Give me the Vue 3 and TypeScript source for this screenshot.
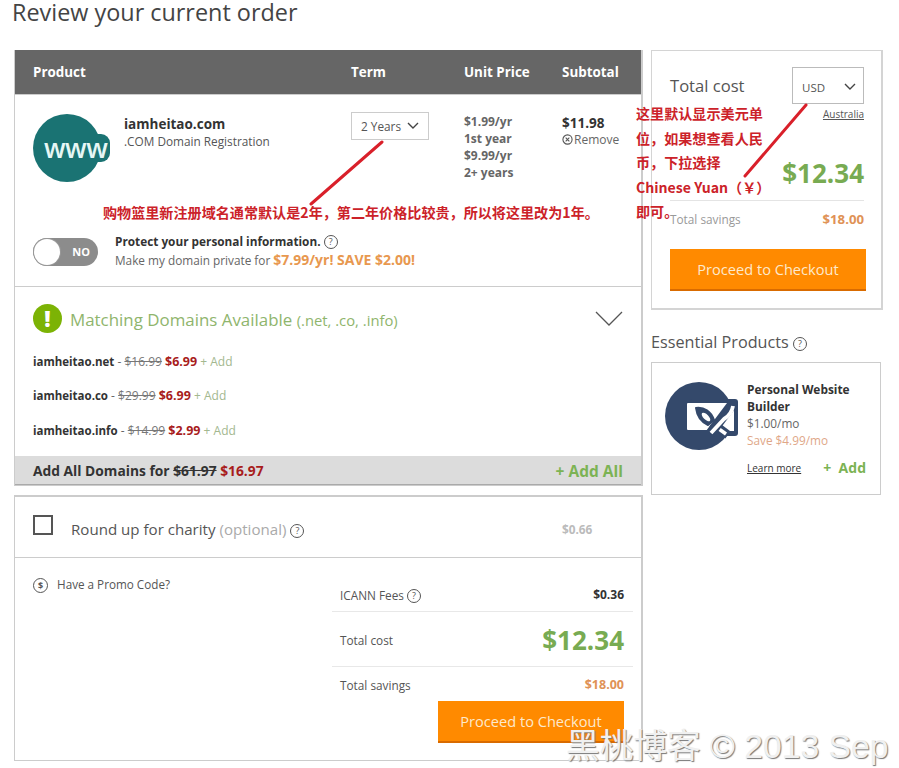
<template>
  <div class="page">
    <h1 class="title">Review your current order</h1>
    <div class="columns">
      <div class="main">
        <section class="card order">
          <div class="grid head">
            <span>Product</span>
            <span>Term</span>
            <span>Unit Price</span>
            <span>Subtotal</span>
          </div>
          <div class="grid product">
            <div class="product-info">
              <div class="www"><span>www</span></div>
              <div class="domain-text">
                <div class="domain">iamheitao.com</div>
                <div class="domain-type">.COM Domain Registration</div>
              </div>
            </div>
            <div class="term">
              2 Years
              <svg width="12" height="8" viewBox="0 0 12 8"><path d="M1 1l5 5 5-5" fill="none" stroke="#444" stroke-width="1.4" /></svg>
            </div>
            <div class="unit">$1.99/yr<br />1st year<br />$9.99/yr<br />2+ years</div>
            <div class="sub-col">
              <div class="subtotal">$11.98</div>
              <div class="remove">
                <svg width="11" height="11" viewBox="0 0 12 12"><circle cx="6" cy="6" r="5" fill="none" stroke="#555" stroke-width="1.2" /><path d="M4 4l4 4M8 4l-4 4" stroke="#555" stroke-width="1.2" /></svg>
                Remove
              </div>
            </div>
          </div>
          <div class="privacy">
            <div class="toggle"><span class="knob"></span><span class="no">NO</span></div>
            <div>
              <div class="protect">Protect your personal information. <i class="help">?</i></div>
              <div class="private">Make my domain private for <b>$7.99/yr! SAVE $2.00!</b></div>
            </div>
          </div>
          <div class="matching">
            <div class="match-title">
              <span class="alert">!</span>
              <span class="match-text">Matching Domains Available <small>(.net, .co, .info)</small></span>
              <svg class="chevron" width="28" height="16" viewBox="0 0 28 16"><path d="M1 1l13 13L27 1" fill="none" stroke="#555" stroke-width="1.3" /></svg>
            </div>
            <div v-for="d in domains" :key="d.name" class="match-row">
              <b class="name">{{ d.name }}</b> - <s>{{ d.was }}</s> <b class="red">{{ d.now }}</b> <span class="add-small">+ Add</span>
            </div>
          </div>
          <div class="add-all">
            <span>Add All Domains for <s>$61.97</s> <span class="red">$16.97</span></span>
            <span class="add-all-link">+ Add All</span>
          </div>
        </section>

        <section class="card bottom">
          <div class="charity">
            <span class="check"></span>
            <span class="charity-text">Round up for charity <em>(optional)</em> <i class="help">?</i></span>
            <b class="charity-price">$0.66</b>
          </div>
          <div class="summary">
            <div class="promo"><i class="dollar">$</i> Have a Promo Code?</div>
            <div class="totals">
              <div class="line fees"><span>ICANN Fees <i class="help">?</i></span><b>$0.36</b></div>
              <div class="line total"><span>Total cost</span><b class="big">$12.34</b></div>
              <div class="line savings"><span>Total savings</span><b class="orange">$18.00</b></div>
              <button class="checkout wide">Proceed to Checkout</button>
            </div>
          </div>
        </section>
      </div>

      <aside class="side">
        <section class="card cost">
          <div class="cost-top">
            <span class="cost-label">Total cost</span>
            <div class="currency">
              USD
              <svg width="12" height="8" viewBox="0 0 12 8"><path d="M1 1l5 5 5-5" fill="none" stroke="#444" stroke-width="1.4" /></svg>
            </div>
          </div>
          <div class="australia">Australia</div>
          <div class="cost-price">$12.34</div>
          <div class="cost-save"><span>Total savings</span><b class="orange">$18.00</b></div>
          <button class="checkout">Proceed to Checkout</button>
        </section>
        <h2 class="essential">Essential Products <i class="help">?</i></h2>
        <section class="card builder">
          <svg class="builder-icon" width="73" height="68" viewBox="0 0 73 68">
            <circle cx="34" cy="34" r="34" fill="#34496b" />
            <rect x="24" y="17" width="49" height="37" rx="3" fill="#34496b" />
            <rect x="22" y="21" width="47" height="27" rx="1" fill="#fff" />
            <path d="M60 49h9v-9z" fill="#fff" />
            <!-- brush -->
            <path d="M31 26c8-1 15 3 18 12l-6 5c-7-3-11-9-12-17z" fill="#34496b" stroke="#34496b" stroke-width="2" stroke-linejoin="round" />
            <ellipse cx="41" cy="35" rx="5.5" ry="2.6" transform="rotate(45 41 35)" fill="#fff" />
            <path d="M47 41l16 12" stroke="#34496b" stroke-width="9" />
            <path d="M47 42l14 10" stroke="#fff" stroke-width="3.5" />
            <!-- pencil -->
            <path d="M69 20L45 52" stroke="#34496b" stroke-width="10" />
            <path d="M68 24c-1 6-4 10-9 13L46 51" fill="none" stroke="#fff" stroke-width="3.8" />
          </svg>
          <div class="builder-info">
            <div class="builder-name">Personal Website Builder</div>
            <div class="builder-price">$1.00/mo</div>
            <div class="builder-save">Save $4.99/mo</div>
            <div class="builder-actions">
              <span class="learn">Learn more</span>
              <span class="builder-add">+&nbsp; Add</span>
            </div>
          </div>
        </section>
      </aside>
    </div>

    <!-- annotations drawn over the screenshot -->
    <svg class="marks" width="899" height="768" viewBox="0 0 899 768">
      <path d="M382 142L311 204M806 105L745 176" stroke="#d9202a" stroke-width="3" stroke-linecap="round" />
    </svg>
    <div class="note note-term">购物篮里新注册域名通常默认是2年，第二年价格比较贵，所以将这里改为1年。</div>
    <div class="note note-currency">这里默认显示美元单<br />位，如果想查看人民<br />币，下拉选择<br />Chinese Yuan（￥）<br />即可。</div>
    <div class="watermark">黑桃博客 © 2013 Sep</div>
  </div>
</template>

<script setup lang="ts">
const domains = [
  { name: 'iamheitao.net', was: '$16.99', now: '$6.99' },
  { name: 'iamheitao.co', was: '$29.99', now: '$6.99' },
  { name: 'iamheitao.info', was: '$14.99', now: '$2.99' },
]
</script>

<style>
body {
  background: #fff;
}
</style>

<style scoped>
.page {
  position: relative;
  width: 899px;
  height: 768px;
  overflow: hidden;
  padding-left: 14px;
  box-sizing: border-box;
  font-family: 'Open Sans', 'Noto Sans CJK SC', sans-serif;
  color: #444;
}

.title {
  margin: 0 0 0 -2px;
  height: 50px;
  font-size: 23.4px;
  line-height: 24px;
  font-weight: 400;
  color: #444;
}

.columns {
  display: flex;
  align-items: flex-start;
  gap: 8px;
}

.main {
  width: 629px;
}

.card {
  border: 1px solid #ccc;
  background: #fff;
  box-sizing: border-box;
}

.order {
  height: 436px;
  border-width: 0 2px 1px 1px;
  display: flex;
  flex-direction: column;
}

.grid {
  display: grid;
  grid-template-columns: 318px 113px 98px 1fr;
}

.head {
  height: 45px;
  padding-left: 18px;
  align-items: center;
  background: #666;
  color: #fff;
  font-size: 13.4px;
  font-weight: 700;
  border-bottom: 1px solid #ccc;
  box-sizing: border-box;
}

.product {
  padding: 17px 0 0 18px;
  height: 103px;
  box-sizing: border-box;
}

.product-info {
  display: flex;
  gap: 11px;
}

.www {
  position: relative;
  width: 80px;
  height: 68px;
  margin-top: 2px;
  flex: none;
}

.www::before {
  content: '';
  position: absolute;
  left: 0;
  top: 0;
  width: 68px;
  height: 68px;
  border-radius: 50%;
  background: #1a7373;
}

.www span {
  position: absolute;
  left: 9px;
  top: 20px;
  padding: 0 3px 0 2px;
  border-radius: 0 9px 9px 0;
  background: #1a7373;
  color: #e6f7f5;
  font-size: 26.5px;
  line-height: 28px;
  font-weight: 600;
  letter-spacing: -0.5px;
}

.domain-text {
  padding-top: 4px;
}

.domain {
  font-size: 13.5px;
  line-height: 17px;
  font-weight: 700;
  color: #333;
}

.domain-type {
  font-size: 11.8px;
  line-height: 17px;
  color: #555;
}

.term {
  display: flex;
  align-items: center;
  justify-content: space-between;
  width: 78px;
  height: 28px;
  padding: 0 9px;
  box-sizing: border-box;
  border: 1px solid #ccc;
  font-size: 11.8px;
  color: #555;
}

.unit {
  padding-top: 1px;
  font-size: 12px;
  line-height: 17px;
  font-weight: 700;
  color: #666;
}

.sub-col {
  padding-top: 2px;
}

.subtotal {
  font-size: 13.5px;
  line-height: 18px;
  font-weight: 700;
  color: #333;
}

.remove {
  display: flex;
  align-items: center;
  gap: 1px;
  font-size: 12px;
  line-height: 16px;
  color: #666;
}

.privacy {
  display: flex;
  height: 89px;
  padding: 35px 0 0 18px;
  box-sizing: border-box;
  gap: 17px;
  border-bottom: 1px solid #ccc;
}

.toggle {
  position: relative;
  width: 65px;
  height: 28px;
  margin-top: 5px;
  border-radius: 14px;
  background: #8c8c8c;
}

.knob {
  position: absolute;
  left: 1px;
  top: 1px;
  width: 26px;
  height: 26px;
  border-radius: 50%;
  background: #fff;
  box-shadow: 0 0 0 1px #999;
}

.no {
  position: absolute;
  right: 8px;
  top: 7px;
  font-size: 11px;
  line-height: 14px;
  font-weight: 700;
  color: #fff;
}

.protect {
  margin-top: -1px;
  font-size: 11.8px;
  line-height: 18px;
  font-weight: 700;
  color: #333;
}

.private {
  font-size: 11.8px;
  line-height: 19px;
  color: #666;
}

.private b {
  font-size: 14px;
  color: #e8984f;
}

.help {
  display: inline-block;
  width: 12px;
  height: 12px;
  border: 1px solid #555;
  border-radius: 50%;
  font-size: 9px;
  line-height: 12px;
  text-align: center;
  font-style: normal;
  font-weight: 400;
  color: #555;
  vertical-align: 1px;
}

.matching {
  flex: 1;
  padding: 17px 18px 0 18px;
}

.match-title {
  display: flex;
  align-items: center;
  margin-bottom: 19px;
  height: 30px;
}

.alert {
  width: 29px;
  height: 29px;
  margin-right: 8px;
  border-radius: 50%;
  background: #7cb305;
  color: #fff;
  font-size: 22px;
  line-height: 29px;
  font-weight: 800;
  text-align: center;
}

.match-text {
  flex: 1;
  padding-top: 2px;
  font-size: 16.9px;
  color: #8fb56d;
}

.match-text small {
  font-size: 14.8px;
}

.match-row {
  height: 34.5px;
  font-size: 12px;
  line-height: 18px;
  color: #666;
}

.match-row .name {
  font-size: 11.5px;
  color: #333;
}

.match-row s {
  color: #777;
}

.match-row .red {
  font-size: 12.5px;
}

.match-row .red,
.red {
  color: #a81c1c;
}

.add-small {
  color: #a3b88f;
}

.add-all {
  display: flex;
  justify-content: space-between;
  align-items: center;
  height: 29px;
  padding: 0 18px;
  background: #dcdcdc;
  font-size: 13.8px;
  font-weight: 700;
  color: #333;
  box-shadow: inset 0 -1px 0 #aaa;
}

.add-all-link {
  font-size: 15.5px;
  color: #7cb354;
}

.bottom {
  height: 266px;
  margin-top: 9px;
  border-width: 2px 2px 1px 1px;
}

.charity {
  display: flex;
  align-items: center;
  height: 61px;
  padding: 3px 0 0 18px;
  box-sizing: border-box;
  border-bottom: 1px solid #ccc;
}

.check {
  width: 16px;
  height: 16px;
  margin: -7px 18px 0 0;
  border: 2px solid #555;
}

.charity-text {
  width: 491px;
  font-size: 15.1px;
  color: #555;
}

.charity-text em {
  font-style: normal;
  color: #aaa;
}

.charity-price {
  font-size: 11.8px;
  color: #bbb;
}

.summary {
  display: flex;
  justify-content: space-between;
  padding-left: 18px;
}

.promo {
  margin-top: 18px;
  font-size: 11.7px;
  color: #555;
}

.dollar {
  display: inline-block;
  width: 13px;
  height: 13px;
  margin-right: 6px;
  border: 1.5px solid #555;
  border-radius: 50%;
  font-size: 9px;
  line-height: 13px;
  text-align: center;
  font-style: normal;
  font-weight: 700;
}

.totals {
  width: 301px;
  margin-right: 8px;
  display: flex;
  flex-direction: column;
}

.line {
  display: flex;
  justify-content: space-between;
  align-items: center;
  padding: 0 9px 0 8px;
  font-size: 11.8px;
  color: #555;
}

.line b {
  font-size: 12px;
  color: #333;
}

.fees {
  height: 54px;
  padding-top: 20px;
  box-sizing: border-box;
  border-bottom: 1px solid #e8e8e8;
}

.total {
  height: 55px;
  padding-top: 2px;
  box-sizing: border-box;
  border-bottom: 1px solid #e8e8e8;
}

.line .big {
  font-size: 26px;
  color: #78ab52;
}

.savings {
  height: 35px;
}

.line .orange {
  font-size: 12.5px;
}

.orange {
  color: #df9256 !important;
}

.checkout {
  display: block;
  width: 196px;
  height: 42px;
  padding: 0;
  border: 0;
  border-bottom: 2px solid #d96b00;
  background: #ff8a00;
  color: #fde9cc;
  font-family: inherit;
  font-size: 14.6px;
}

.wide {
  align-self: flex-end;
  margin: -1px 9px 0 0;
  width: 186px;
}

.side {
  width: 232px;
}

.cost {
  height: 260px;
  padding: 16px 17px 0 18px;
  border-width: 1px 2px 2px 1px;
  border-color: #d4d4d4;
}

.cost-top {
  display: flex;
  justify-content: space-between;
}

.cost-label {
  margin-top: 7px;
  font-size: 16.6px;
  color: #555;
}

.currency {
  display: flex;
  align-items: center;
  justify-content: space-between;
  width: 72px;
  height: 37px;
  padding: 3px 7px 0 9px;
  box-sizing: border-box;
  border: 1px solid #bbb;
  font-size: 11.5px;
  color: #555;
}

.australia {
  margin-top: 3px;
  text-align: right;
  font-size: 10px;
  line-height: 14px;
  color: #555;
  text-decoration: underline;
}

.cost-price {
  margin-top: 33px;
  height: 46px;
  text-align: right;
  font-size: 26px;
  line-height: 39px;
  font-weight: 700;
  color: #78ab52;
}

.cost-save {
  display: flex;
  justify-content: space-between;
  align-items: center;
  height: 38px;
  padding-bottom: 2px;
  box-sizing: border-box;
  border-top: 1px solid #e4e4e4;
  font-size: 11.8px;
  color: #999;
  margin-bottom: 11px;
}

.cost-save b {
  font-size: 13.2px;
}

.essential {
  margin: 21px 0 9px;
  height: 22px;
  font-size: 16.2px;
  line-height: 22px;
  font-weight: 400;
  color: #555;
}

.builder {
  display: flex;
  width: 230px;
  height: 133px;
  padding: 19px 0 0 13px;
  border-width: 1px;
}

.builder-icon {
  flex: none;
  margin-right: 9px;
}

.builder-info {
  width: 119px;
  margin-top: -1px;
}

.builder-name {
  font-size: 11.9px;
  line-height: 17px;
  font-weight: 700;
  color: #333;
}

.builder-price,
.builder-save {
  font-size: 11.8px;
  line-height: 17px;
  color: #666;
}

.builder-save {
  color: #e0a788;
}

.builder-actions {
  display: flex;
  align-items: center;
  justify-content: space-between;
  margin-top: 9px;
}

.learn {
  font-size: 10px;
  color: #333;
  text-decoration: underline;
}

.builder-add {
  font-size: 14px;
  font-weight: 700;
  color: #7cb354;
}

.marks {
  position: absolute;
  left: 0;
  top: 0;
  pointer-events: none;
}

.note {
  position: absolute;
  color: #cc2229;
  font-size: 14.1px;
  font-weight: 700;
  font-family: 'Noto Sans CJK SC', sans-serif;
  white-space: nowrap;
  text-spacing-trim: space-all;
}

.note-term {
  left: 103px;
  top: 201px;
  line-height: 22px;
}

.note-currency {
  left: 636px;
  top: 101px;
  line-height: 24.5px;
}

.watermark {
  position: absolute;
  left: 566px;
  top: 727px;
  font-family: 'Liberation Sans', 'Noto Sans CJK SC', sans-serif;
  font-size: 33.7px;
  line-height: 38px;
  white-space: nowrap;
  color: #f0f0f0;
  text-shadow: 1px 1px 1px #777;
}
</style>
